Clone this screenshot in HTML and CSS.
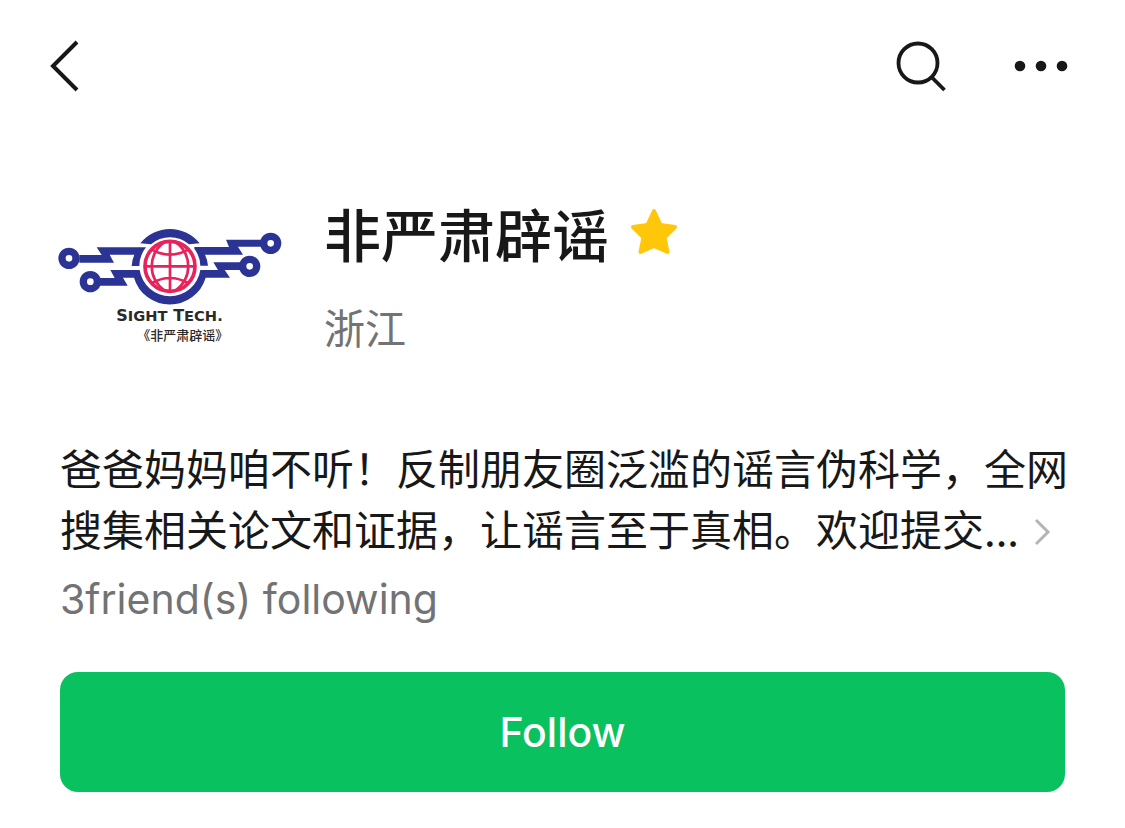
FILE: index.html
```html
<!DOCTYPE html>
<html lang="zh-CN">
<head>
<meta charset="utf-8">
<meta name="viewport" content="width=device-width, initial-scale=1">
<title>非严肃辟谣</title>
<link rel="stylesheet" href="styles.css">
</head>
<body>
<header class="topbar">
  <button class="icon-button" type="button" aria-label="Back">
    <svg width="30" height="52" viewBox="0 0 30 52" fill="none" stroke="#181818" stroke-width="4"><path d="M28 2 4 26 28 50"/></svg>
  </button>
  <div class="actions">
    <button class="icon-button" type="button" aria-label="Search">
      <svg width="52" height="52" viewBox="0 0 52 52" fill="none" stroke="#181818" stroke-width="3.8"><circle cx="22" cy="23" r="19.500"/><path d="M35.500 37 48.500 50"/></svg>
    </button>
    <button class="icon-button" type="button" aria-label="More">
      <svg width="54" height="52" viewBox="0 0 54 52" fill="#181818"><circle cx="6" cy="26" r="5.300"/><circle cx="27" cy="26" r="5.300"/><circle cx="48" cy="26" r="5.300"/></svg>
    </button>
  </div>
</header>
<main class="content">
  <section class="profile">
    <svg class="logo" viewBox="48 24 684 366" role="img" aria-label="Sight Tech. 《非严肃辟谣》">
      <g fill="#2b3494">
        <path d="M301 85A114 114 0 0 1 479 85L447 88A86 86 0 0 0 333 88Z"/>
        <path d="M170 97H318A89 89 0 0 0 298 153H275Q276 134 283 119H209L222 143H118V120H185Z"/>
        <path d="M463 96H567L558 74H668V95H594L609 119H495Q503 135 504 152H481A89 89 0 0 0 463 101Z"/>
        <path d="M211 165H299A92 92 0 0 0 481 165H534L520 142H605V165H554L570 188H497A112 112 0 0 1 282 188H249L263 212H176V189H224Z"/>
      </g>
      <g fill="#fff" stroke="#2b3494" stroke-width="22">
        <circle cx="87" cy="130" r="21"/><circle cx="151" cy="200" r="21"/>
        <circle cx="692" cy="85" r="21"/><circle cx="629" cy="154" r="21"/>
      </g>
      <g fill="none" stroke="#e7235c" stroke-width="8">
        <circle cx="390" cy="154" r="75" stroke-width="11"/>
        <path d="M390 78V230M314 154H466M334 103Q390 135 446 103M334 205Q390 173 446 205"/>
        <path d="M375 80C322 118 322 190 375 228M405 80C458 118 458 190 405 228"/>
      </g>
      <text class="logo-name" x="229" y="319">S<tspan class="logo-small">IGHT</tspan> T<tspan class="logo-small">ECH.</tspan></text>
      <text class="logo-caption" x="292" y="376">《非严肃辟谣》</text>
    </svg>
    <div class="identity">
      <div class="title-row">
        <h1 class="title">非严肃辟谣</h1>
        <svg class="star" viewBox="0 0 50 50" fill="#ffc60a" stroke="#ffc60a" stroke-width="4" stroke-linejoin="round" aria-hidden="true"><path d="M25 4 31.500 18 46 20 35.500 30.500 38.500 45 25 39 11.500 45 14.500 30.500 4 20 18.500 18Z"/></svg>
      </div>
      <p class="region">浙江</p>
    </div>
  </section>
  <a class="description" href="#">爸爸妈妈咱不听！反制朋友圈泛滥的谣言伪科学，全网<br>搜集相关论文和证据，让谣言至于真相。欢迎提交...<svg class="chevron" viewBox="0 0 18 28" fill="none" stroke="#b5b5b5" stroke-width="3" aria-hidden="true"><path d="M3 2 15 14 3 26"/></svg></a>
  <p class="friends">3friend(s) following</p>
  <button class="follow" type="button">Follow</button>
</main>
</body>
</html>
```
FILE: styles.css
```css
* { box-sizing: border-box; }
body {
  margin: 0;
  background: #fff;
  color: #181818;
  font-family: Inter, "Noto Sans CJK SC", sans-serif;
}
h1, p { margin: 0; }
button { border: 0; padding: 0; font: inherit; cursor: pointer; }
svg { display: block; }
.topbar {
  display: flex;
  justify-content: space-between;
  padding: 40px 57px 0 49px;
}
.icon-button { background: none; }
.actions { display: flex; gap: 66px; }
.content { padding: 0 60px 36px; }
.profile {
  display: flex;
  align-items: flex-start;
  gap: 40px;
  padding-top: 100px;
}
.logo {
  flex: none;
  width: 228px;
  height: 122px;
  margin: 31px 0 0 -4px;
}
.logo-name {
  font: 700 48px "DejaVu Sans", sans-serif;
  fill: #2b2929;
}
.logo-small { font-size: 44px; }
.logo-caption {
  font: 500 39px "Noto Sans CJK SC", sans-serif;
  fill: #2b2929;
}
.title-row { display: flex; align-items: center; gap: 20px; }
.title {
  font: 500 57px/80px "Noto Sans CJK SC", sans-serif;
}
.star { width: 50px; height: 50px; }
.region {
  margin-top: 24px;
  color: #737373;
  font: 400 41px/60px "Noto Sans CJK SC", sans-serif;
}
.description {
  display: block;
  margin: 80px -8px 0 0;
  color: inherit;
  font: 400 42px/61px "Noto Sans CJK SC", sans-serif;
  text-decoration: none;
}
.chevron {
  display: inline-block;
  width: 18px;
  height: 28px;
  margin-left: 14px;
}
.friends {
  margin-top: 11px;
  color: #737373;
  font-size: 41px;
  line-height: 60px;
}
.follow {
  display: block;
  width: 100%;
  margin-top: 43px;
  padding: 30px;
  border-radius: 18px;
  background: #0ac160;
  color: #fff;
  font-size: 41px;
  font-weight: 500;
  line-height: 60px;
}
```
